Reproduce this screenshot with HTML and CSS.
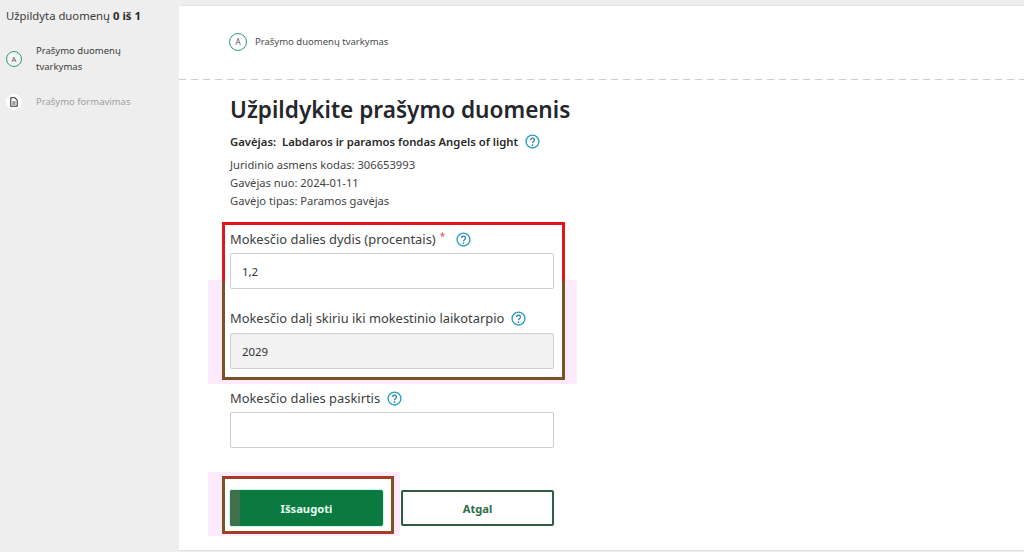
FILE: index.html
```html
<!DOCTYPE html>
<html lang="lt">
<head>
<meta charset="utf-8">
<title>Prašymo duomenų tvarkymas</title>
<link rel="stylesheet" href="styles.css">
</head>
<body>
<div class="app">
  <aside class="sidebar">
    <div class="progress">Užpildyta duomenų <b>0 iš 1</b></div>
    <div class="side-step">
      <span class="step-badge small">A</span>
      <span class="side-label">Prašymo duomenų tvarkymas</span>
    </div>
    <div class="side-step muted">
      <span class="doc-badge">
        <svg viewBox="0 0 10 12" width="8" height="10"><path d="M1 .8h5l3 3v7.4H1z" fill="none" stroke="#333" stroke-width="1.3"/><path d="M3 6h4M3 8.5h4" stroke="#333" stroke-width="1.2"/></svg>
      </span>
      <span class="side-label">Prašymo formavimas</span>
    </div>
  </aside>
  <main class="main">
    <div class="crumb">
      <span class="step-badge">A</span>
      <span>Prašymo duomenų tvarkymas</span>
    </div>
    <section class="content">
      <h1>Užpildykite prašymo duomenis</h1>
      <p class="recipient"><b>Gavėjas:&nbsp; Labdaros ir paramos fondas Angels of light</b><svg class="help" viewBox="0 0 14 14"><use href="#q"/></svg></p>
      <ul class="meta">
        <li>Juridinio asmens kodas: 306653993</li>
        <li>Gavėjas nuo: 2024-01-11</li>
        <li>Gavėjo tipas: Paramos gavėjas</li>
      </ul>
      <div class="marked-group">
        <div class="band"></div>
        <div class="field">
          <label>Mokesčio dalies dydis (procentais) <i>*</i><svg class="help" viewBox="0 0 14 14"><use href="#q"/></svg></label>
          <div class="input">1,2</div>
        </div>
        <div class="field second">
          <label>Mokesčio dalį skiriu iki mokestinio laikotarpio<svg class="help" viewBox="0 0 14 14"><use href="#q"/></svg></label>
          <div class="input disabled">2029</div>
        </div>
      </div>
      <div class="field third">
        <label>Mokesčio dalies paskirtis<svg class="help" viewBox="0 0 14 14"><use href="#q"/></svg></label>
        <div class="input"></div>
      </div>
      <div class="actions">
        <div class="marked-btn">
          <div class="band"></div>
          <button class="btn primary"><span class="btn-shade"></span>Išsaugoti</button>
        </div>
        <button class="btn secondary">Atgal</button>
      </div>
    </section>
  </main>
</div>
<svg class="defs" width="0" height="0">
  <symbol id="q" viewBox="0 0 14 14">
    <circle cx="7" cy="7" r="6" fill="none" stroke="#2a9fc4" stroke-width="1.3"/>
    <path d="M5.2 5.6A1.8 1.8 0 1 1 7.9 7.2C7.3 7.6 7 7.9 7 8.6" fill="none" stroke="#2b7fa8" stroke-width="1.2"/>
    <circle cx="7" cy="10.3" r=".8" fill="#2b7fa8"/>
  </symbol>
</svg>
</body>
</html>
```
FILE: styles.css
```css
* { box-sizing: border-box; }
html, body { margin: 0; height: 100%; }
body {
  background: #eeeeee;
  font-family: "Noto Sans", "Open Sans", sans-serif;
  color: #3a3a3a;
  overflow: hidden;
}
.app { display: flex; height: 552px; }
.sidebar { width: 179px; flex: none; padding: 8px 6px 0; }
.progress { font-size: 11.3px; line-height: 16px; color: #3c3c3c; margin-bottom: 19px; }
.progress b { color: #2a2a2a; }
.side-step { display: flex; align-items: center; gap: 14px; margin-bottom: 20px; }
.side-label { font-size: 9.5px; line-height: 15.5px; width: 100px; color: #3a3a3a; }
.muted .side-label { color: #a0a0a0; width: 110px; }
.step-badge {
  width: 18px; height: 18px; flex: none;
  border: 1.3px solid #2f9a78; border-radius: 50%;
  display: inline-flex; align-items: center; justify-content: center;
  font-size: 8px; color: #555; background: #fff;
}
.step-badge.small { width: 16px; height: 16px; font-size: 7.5px; background: #f4f4f4; }
.doc-badge {
  width: 16px; height: 16px; flex: none; border-radius: 50%; background: #fff;
  display: inline-flex; align-items: center; justify-content: center;
}
.main {
  position: relative; z-index: 0;
  flex: 1; background: #fff; margin-top: 5px; margin-bottom: 1px;
  border-top: 1px solid #e4e4e4; border-bottom: 1px solid #e0e0e0;
}
.crumb {
  height: 74px; padding: 0 0 3px 50px;
  display: flex; align-items: center; gap: 8px;
  font-size: 9.5px; color: #4a4a4a;
  background: repeating-linear-gradient(90deg, #cdcdcd 0 7px, transparent 7px 12px) left bottom / 100% 1px no-repeat;
}
.content { position: relative; z-index: 0; padding: 0 0 0 51px; width: 426px; }
h1 { margin: 14px 0 0; font-size: 22.6px; line-height: 31px; font-weight: 600; color: #24262b; }
.recipient { margin: 9px 0 0; font-size: 11.3px; line-height: 15px; color: #2a2a2a; display: flex; align-items: center; }
.recipient b { font-weight: 600; }
.meta { list-style: none; margin: 7px 0 0; padding: 0; font-size: 11.2px; line-height: 18px; color: #444; }
.help { width: 15px; height: 15px; margin-left: 7px; flex: none; }
.marked-group {
  position: relative;
  margin: 12px 0 0 -8px;
  padding: 3px 8px 8px 5px;
  width: 343px;
  height: 158px;
  background: #fff;
  border: 3px solid;
  border-image: linear-gradient(#e3141c 0 37%, #7a5226 37%) 1;
}
.band { position: absolute; background: #fdeafd; z-index: -1; }
.marked-group .band { left: -17px; right: -15px; top: 55px; bottom: -7px; }
label { display: flex; align-items: center; font-size: 12.9px; line-height: 18px; height: 22px; color: #404040; }
label i { color: #e8506a; font-style: normal; font-size: 10px; margin: -6px 4px 0 4px; }
.input {
  height: 36px; margin-top: 3px; padding: 0 11px;
  border: 1px solid #cfcfcf; border-radius: 2px; background: #fff;
  display: flex; align-items: center; font-size: 11.4px; color: #333;
}
.input.disabled { background: #f2f2f2; margin-top: 4px; }
.field.second { margin-top: 18px; }
.field.third { margin-top: 7px; width: 324px; }
.actions { display: flex; align-items: flex-start; gap: 7px; margin-top: 28px; margin-left: -8px; }
.marked-btn {
  position: relative; width: 172px; height: 58px; padding: 11px 5px;
  border: 3px solid #a83c22; border-left-color: #7a5226; border-right-color: #7a5226;
  flex: none; display: flex; background: #fff;
}
.marked-btn .band { left: -17px; right: -9px; top: -7px; bottom: -5px; }
.btn {
  position: relative; width: 153px; height: 36px; border-radius: 2px; flex: none;
  font: 700 11.2px "Noto Sans", "Open Sans", sans-serif; cursor: pointer; padding: 0;
}
.primary { background: #0b7a40; color: #e6fff2; border: 1px solid #0b7a40; box-shadow: 0 0 0 1px #c8fbe8; }
.btn-shade { position: absolute; left: -1px; top: -1px; bottom: -1px; width: 10px; background: #3f6f4c; border-radius: 2px 0 0 2px; }
.secondary { background: #fff; color: #2c6e47; border: 2px solid #2e5e42; margin-top: 14px; }
.defs { position: absolute; }
```
